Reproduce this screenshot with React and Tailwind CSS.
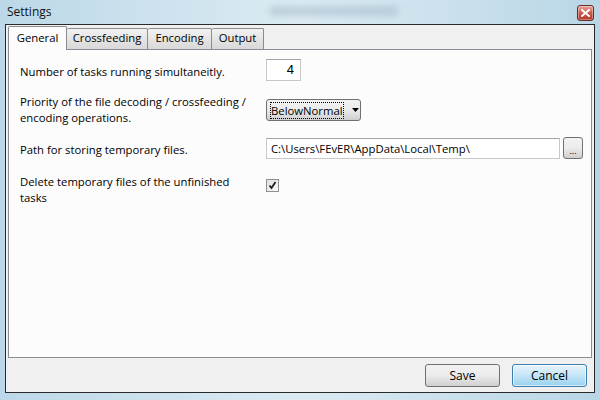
import React from 'react';

const font = { fontFamily: '"Open Sans", "Noto Sans", sans-serif' };

function CloseButton() {
  return (
    <div className="w-[17px] h-[16px] rounded-[3px] border border-[#6b2a22] bg-gradient-to-b from-[#e8a89c] via-[#c8584a] to-[#b2392b] flex items-center justify-center shadow-[inset_0_0_0_1px_rgba(255,255,255,0.35)]">
      <svg width="9" height="8" viewBox="0 0 9 8">
        <path d="M1 1 L8 7 M8 1 L1 7" stroke="#fff" strokeWidth="2" strokeLinecap="square" />
      </svg>
    </div>
  );
}

function Tab({ label, active, w }) {
  if (active) {
    return (
      <div className="relative z-10 -mb-px h-[24px] w-[59px] pt-[3px] text-center border border-b-0 border-[#898c95] bg-[#fcfcfc] rounded-t-[2px]">
        {label}
      </div>
    );
  }
  return (
    <div className={`mt-[2px] h-[21px] pt-[1px] text-center border border-b-0 border-l-0 border-[#898c95] bg-gradient-to-b from-[#f2f2f2] to-[#d8d8d8] rounded-t-[2px] ${w}`}>
      {label}
    </div>
  );
}

export default function App() {
  return (
    <div style={font} className="w-[600px] h-[400px] bg-gradient-to-r from-[#bcd8e8] via-[#dcebf3] to-[#b9d6e6] flex flex-col text-[11.3px] text-black overflow-hidden">
      {/* title bar */}
      <div className="h-[24px] flex items-start justify-between pl-[7px] pr-[6px]">
        <span className="pt-[3px] text-[12px] text-[#111]">Settings</span>
        <div className="flex-1 flex justify-center pt-[6px]">
          <div className="w-[130px] h-[10px] rounded-full bg-[#9fb8c8]/50 blur-[3px] ml-[40px]" />
        </div>
        <div className="pt-[5px]">
          <CloseButton />
        </div>
      </div>

      {/* client */}
      <div className="flex-1 mx-[5px] mb-[7px] border border-[#2a2a2a] bg-[#f0f0f0] flex flex-col">
        <div className="px-[2px] pt-[1px]">
          <div className="flex items-start">
            <Tab label="General" active />
            <Tab label="Crossfeeding" w="w-[81px]" />
            <Tab label="Encoding" w="w-[64px]" />
            <Tab label="Output" w="w-[52px]" />
          </div>
          <div className="h-[309px] border border-[#898c95] bg-[#fcfcfc] flex flex-col pl-[11px] pr-[11px]">
            <div className="grid grid-cols-[245px_1fr] gap-x-[1px]">
              {/* tasks */}
              <div className="pt-[14px] h-[42px]">Number of tasks running simultaneitly.</div>
              <div className="pt-[9px]">
                <div className="w-[35px] h-[22px] border border-[#c8c8c8] border-t-[#a5a5a5] bg-white text-right pr-[6px] text-[13px] leading-[20px]" style={{ fontFamily: '"Liberation Sans", Arial, sans-serif' }}>4</div>
              </div>

              {/* priority */}
              <div className="pt-[2px] leading-[16px] h-[40px]">
                Priority of the file decoding / crossfeeding /<br />encoding operations.
              </div>
              <div className="pt-[7px]">
                <div className="w-[95px] h-[22px] rounded-[3px] border border-[#707070] bg-gradient-to-b from-[#f2f2f2] via-[#ebebeb] to-[#cfcfcf] flex items-center pl-[3px]">
                  <span className="border border-dotted border-black leading-[15px]">BelowNormal</span>
                  <svg className="ml-[8px]" width="7" height="4" viewBox="0 0 7 4">
                    <path d="M0 0 H7 L3.5 4 Z" fill="#000" />
                  </svg>
                </div>
              </div>

              {/* path */}
              <div className="pt-[10px] h-[39px]">Path for storing temporary files.</div>
              <div className="pt-[6px] flex items-start gap-[3px]">
                <div className="w-[294px] h-[21px] border border-[#c8c8c8] border-t-[#a5a5a5] bg-white pl-[4px] leading-[19px]">
                  C:\Users\FEvER\AppData\Local\Temp\
                </div>
                <div className="w-[20px] h-[22px] -mt-[1px] rounded-[3px] border border-[#707070] bg-gradient-to-b from-[#f2f2f2] via-[#ebebeb] to-[#cfcfcf] flex items-end justify-center pb-[4px]">
                  <span className="text-[9px] leading-[6px]">...</span>
                </div>
              </div>

              {/* delete */}
              <div className="pt-[3px] leading-[16px]">
                Delete temporary files of the unfinished<br />tasks
              </div>
              <div className="pt-[8px]">
                <div className="w-[13px] h-[13px] border border-[#8f8f8f] bg-gradient-to-br from-[#e0e0e0] to-[#fafafa] flex items-center justify-center">
                  <svg width="9" height="9" viewBox="0 0 9 9">
                    <path d="M1.5 4.5 L3.5 7 L7.5 1" stroke="#1c1c1c" strokeWidth="1.8" fill="none" />
                  </svg>
                </div>
              </div>
            </div>
          </div>
        </div>

        {/* buttons */}
        <div className="flex justify-end gap-[12px] pr-[7px] pt-[6px] text-[12px]">
          <div className="w-[75px] h-[23px] rounded-[3px] border border-[#707070] bg-gradient-to-b from-[#f2f2f2] via-[#ebebeb] to-[#cfcfcf] flex items-center justify-center">Save</div>
          <div className="w-[75px] h-[23px] rounded-[3px] border border-[#3c7fb1] bg-gradient-to-b from-[#e8f5fc] via-[#c4e5f6] to-[#98d1ef] flex items-center justify-center shadow-[inset_0_0_0_1px_rgba(255,255,255,0.6)]">Cancel</div>
        </div>
      </div>
    </div>
  );
}
